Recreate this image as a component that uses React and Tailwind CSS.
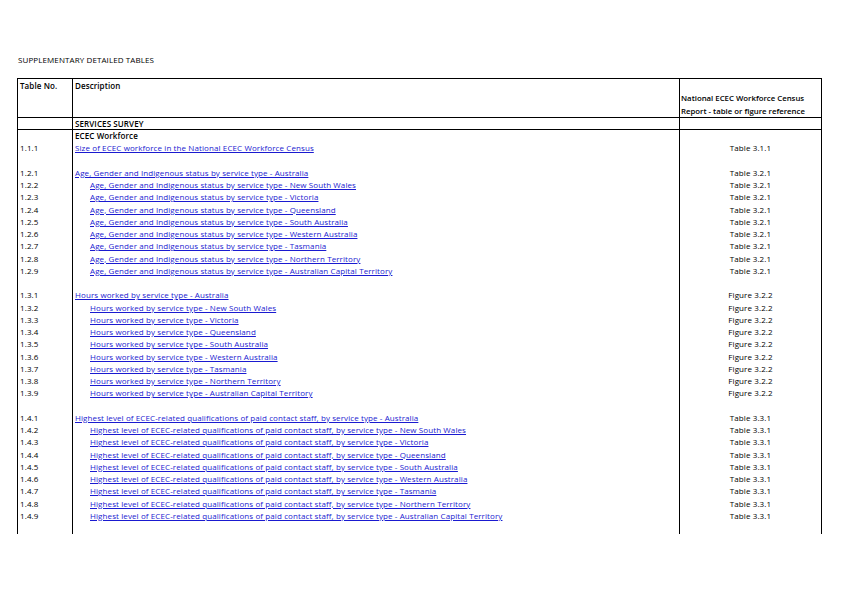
const groups = [
  { n: '1.2', ref: 'Table 3.2.1', base: 'Age, Gender and Indigenous status by service type - ' },
  { n: '1.3', ref: 'Figure 3.2.2', base: 'Hours worked by service type - ' },
  { n: '1.4', ref: 'Table 3.3.1', base: 'Highest level of ECEC-related qualifications of paid contact staff, by service type - ' },
];
const states = ['Australia', 'New South Wales', 'Victoria', 'Queensland', 'South Australia', 'Western Australia', 'Tasmania', 'Northern Territory', 'Australian Capital Territory'];

function Row({ no, desc, ref, link, indent, bold }) {
  return (
    <div className="flex h-[12.25px] leading-[12.25px]">
      <div className="w-[55px] border-l border-black pl-[2px]">{no}</div>
      <div className="w-[607px] border-l border-black pl-[2px]">
        <span className={`${indent ? 'pl-[15px]' : ''} ${link ? 'text-[#1a1ad0] underline' : ''} ${bold ? 'font-semibold' : ''}`}>{desc}</span>
      </div>
      <div className="w-[143px] border-x border-black text-center">{ref}</div>
    </div>
  );
}

export default function App() {
  const rows = [];
  rows.push(<Row key="e" desc="ECEC Workforce" bold />);
  rows.push(<Row key="111" no="1.1.1" desc="Size of ECEC workforce in the National ECEC Workforce Census" ref="Table 3.1.1" link />);
  groups.forEach(g => {
    rows.push(<Row key={g.n + 'b'} />);
    states.forEach((s, i) => {
      rows.push(<Row key={g.n + i} no={`${g.n}.${i + 1}`} desc={g.base + s} ref={g.ref} link indent={i > 0} />);
    });
  });
  rows.push(<Row key="end" />);
  return (
    <div className="w-[842px] h-[595px] bg-white text-black text-[8px] tracking-[0.1px] pt-[54px]" style={{ fontFamily: '"Open Sans", "Liberation Sans", sans-serif' }}>
      <div className="pl-[18px] font-medium h-[24px]">SUPPLEMENTARY DETAILED TABLES</div>
      <div className="ml-[17px] w-[805px]">
        <div className="flex h-[40px] border-y border-black font-semibold">
          <div className="w-[55px] border-l border-black pl-[2px] pt-[1px]">Table No.</div>
          <div className="w-[607px] border-l border-black pl-[2px] pt-[1px]">Description</div>
          <div className="w-[143px] border-x border-black pl-[1px] flex flex-col justify-end leading-[12.5px] tracking-normal text-[7.8px]">
            <div>National ECEC Workforce Census</div>
            <div>Report - table or figure reference</div>
          </div>
        </div>
        <div className="flex h-[12px] leading-[12px] border-b border-black font-semibold">
          <div className="w-[55px] border-l border-black" />
          <div className="w-[607px] border-l border-black pl-[2px]">SERVICES SURVEY</div>
          <div className="w-[143px] border-x border-black" />
        </div>
        {rows}
      </div>
    </div>
  );
}
